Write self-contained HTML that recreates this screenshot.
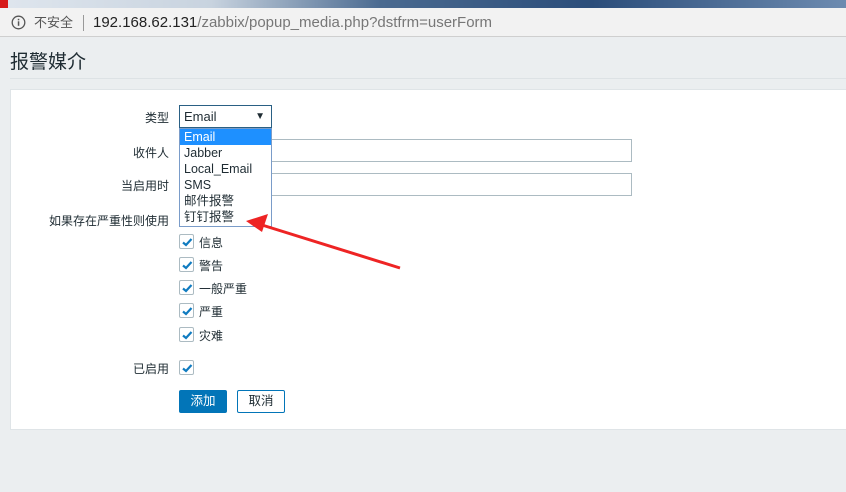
<!DOCTYPE html>
<html><head><meta charset="utf-8"><style>
*{margin:0;padding:0;box-sizing:border-box}
body{width:846px;height:492px;overflow:hidden;background:#ebeef0;font-family:"Liberation Sans","Noto Sans CJK SC",sans-serif;font-size:12px;color:#1f2c33;position:relative}
.abs{position:absolute}
.top{left:0;top:0;width:846px;height:8px;background:linear-gradient(90deg,#dfe6ee 0,#c8d3df 25%,#4a6a90 45%,#2b4d7a 70%,#6d8bb0 100%)}
.addr{left:0;top:8px;width:846px;height:29px;background:#f2f2f2;border-bottom:1px solid #cfcfcf;font-size:15px;line-height:29px;color:#777}
.lbl{right:677px;text-align:right;font-size:12px;white-space:nowrap}
.cb{width:15px;height:15px;border:1px solid #acbbc2;border-radius:2px;background:#fff}
.cb svg{position:absolute;left:1px;top:1px}
.ct{font-size:12px}
</style></head><body>
<div class="abs top"></div>
<div class="abs" style="left:0;top:0;width:8px;height:8px;background:#d71a1a"></div>
<div class="abs addr">
<svg class="abs" style="left:11px;top:7px" width="15" height="15" viewBox="0 0 15 15"><circle cx="7.5" cy="7.5" r="6.3" fill="none" stroke="#555" stroke-width="1.3"/><rect x="6.8" y="6.3" width="1.5" height="4.5" fill="#555"/><rect x="6.8" y="3.8" width="1.5" height="1.5" fill="#555"/></svg>
<span class="abs" style="left:34px;font-size:13px;color:#555">不安全</span>
<span class="abs" style="left:83px;top:7px;width:1px;height:16px;background:#999"></span>
<span class="abs" style="left:93px"><span style="color:#222">192.168.62.131</span>/zabbix/popup_media.php?dstfrm=userForm</span>
</div>
<div class="abs" style="left:10px;top:47px;font-size:19px;color:#1f2c33">报警媒介</div>
<div class="abs" style="left:10px;top:78px;width:836px;height:1px;background:#dde2e5"></div>
<div class="abs" style="left:10px;top:89px;width:840px;height:341px;background:#fff;border:1px solid #dfe4e7"></div>

<div class="abs lbl" style="top:109px">类型</div>
<div class="abs lbl" style="top:144px">收件人</div>
<div class="abs lbl" style="top:177px">当启用时</div>
<div class="abs lbl" style="top:212px">如果存在严重性则使用</div>
<div class="abs lbl" style="top:360px">已启用</div>

<div class="abs" style="left:271px;top:139px;width:361px;height:23px;border:1px solid #acbbc2;border-left:none"></div>
<div class="abs" style="left:271px;top:173px;width:361px;height:23px;border:1px solid #acbbc2;border-left:none"></div>

<div class="abs" style="left:179px;top:105px;width:93px;height:23px;border:1px solid #2a6084;background:#fff;font-size:13px;line-height:21px;padding-left:4px">Email<span class="abs" style="right:6px;top:0;font-size:10px">▼</span></div>
<div class="abs" style="left:179px;top:128px;width:93px;height:99px;border:1px solid #7a9cc9;background:#fff;font-size:12.5px;line-height:16px">
<div style="background:#1e90ff;color:#fff;padding-left:4px">Email</div>
<div style="padding-left:4px">Jabber</div>
<div style="padding-left:4px">Local_Email</div>
<div style="padding-left:4px">SMS</div>
<div style="padding-left:4px">邮件报警</div>
<div style="padding-left:4px">钉钉报警</div>
</div>

<svg class="abs" style="left:0;top:0" width="846" height="492"><line x1="400" y1="268" x2="262" y2="225" stroke="#ee2424" stroke-width="3"/><polygon points="246,221 268,214 262,232" fill="#ee2424"/></svg>

<div class="abs cb" style="left:179px;top:234px"><svg width="12" height="12"><path d="M2 6.5 L5 9 L10.5 3" fill="none" stroke="#0f7bc0" stroke-width="2.2"/></svg></div><div class="abs ct" style="left:199px;top:234px">信息</div>
<div class="abs cb" style="left:179px;top:257px"><svg width="12" height="12"><path d="M2 6.5 L5 9 L10.5 3" fill="none" stroke="#0f7bc0" stroke-width="2.2"/></svg></div><div class="abs ct" style="left:199px;top:257px">警告</div>
<div class="abs cb" style="left:179px;top:280px"><svg width="12" height="12"><path d="M2 6.5 L5 9 L10.5 3" fill="none" stroke="#0f7bc0" stroke-width="2.2"/></svg></div><div class="abs ct" style="left:199px;top:280px">一般严重</div>
<div class="abs cb" style="left:179px;top:303px"><svg width="12" height="12"><path d="M2 6.5 L5 9 L10.5 3" fill="none" stroke="#0f7bc0" stroke-width="2.2"/></svg></div><div class="abs ct" style="left:199px;top:303px">严重</div>
<div class="abs cb" style="left:179px;top:327px"><svg width="12" height="12"><path d="M2 6.5 L5 9 L10.5 3" fill="none" stroke="#0f7bc0" stroke-width="2.2"/></svg></div><div class="abs ct" style="left:199px;top:327px">灾难</div>
<div class="abs cb" style="left:179px;top:360px"><svg width="12" height="12"><path d="M2 6.5 L5 9 L10.5 3" fill="none" stroke="#0f7bc0" stroke-width="2.2"/></svg></div>

<div class="abs" style="left:179px;top:390px;width:48px;height:23px;background:#0275b8;border-radius:2px;color:#fff;text-align:center;line-height:23px;font-size:12.5px">添加</div>
<div class="abs" style="left:237px;top:390px;width:48px;height:23px;border:1px solid #0275b8;border-radius:2px;color:#1f2c33;background:#fff;text-align:center;line-height:21px;font-size:12.5px">取消</div>
</body></html>
